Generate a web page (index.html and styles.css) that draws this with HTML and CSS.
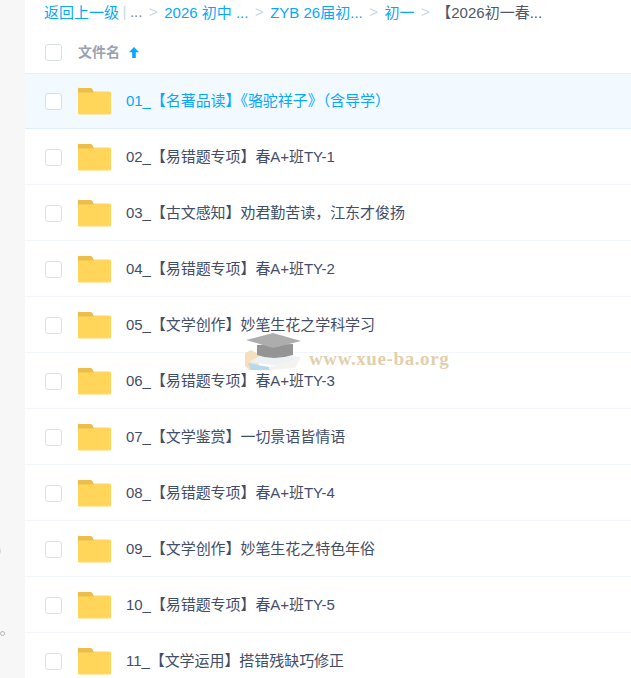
FILE: index.html
```html
<!DOCTYPE html>
<html lang="zh">
<head>
<meta charset="utf-8">
<title>文件列表</title>
<link rel="stylesheet" href="styles.css">
</head>
<body>
<div class="page">
  <aside class="side">
    <span class="dot dot-a"></span>
    <span class="dot dot-b"></span>
  </aside>
  <main class="main">
    <nav class="crumbs">
      <a class="link">返回上一级</a><span class="bar">|</span><a class="link muted">...</a><span class="sep">&gt;</span><a class="link">2026 初中 ...</a><span class="sep">&gt;</span><a class="link">ZYB 26届初...</a><span class="sep">&gt;</span><a class="link">初一</a><span class="sep">&gt;</span><span class="current">【2026初一春...</span>
    </nav>
    <div class="head">
      <span class="check"></span>
      <span class="head-name">文件名</span>
      <svg class="arrow" width="10" height="11" viewBox="0 0 10 11"><path d="M5 0 L10 5.3 H6.8 V11 H3.2 V5.3 H0 Z" fill="#06a7ff"/></svg>
    </div>
    <ul class="list">
      <li class="row active"><span class="check"></span><svg class="folder" width="34" height="28" viewBox="0 0 34 28"><rect y="4.5" width="33" height="23" rx="1.5" fill="#ffd659"/><path d="M0 5.5A1.5 1.5 0 0 1 1.5 1H12.5C14 1 15 2 15.5 5.5Z" fill="#eabd4c"/></svg><span class="name">01_【名著品读】《骆驼祥子》（含导学）</span></li>
      <li class="row"><span class="check"></span><svg class="folder" width="34" height="28" viewBox="0 0 34 28"><rect y="4.5" width="33" height="23" rx="1.5" fill="#ffd659"/><path d="M0 5.5A1.5 1.5 0 0 1 1.5 1H12.5C14 1 15 2 15.5 5.5Z" fill="#eabd4c"/></svg><span class="name">02_【易错题专项】春A+班TY-1</span></li>
      <li class="row"><span class="check"></span><svg class="folder" width="34" height="28" viewBox="0 0 34 28"><rect y="4.5" width="33" height="23" rx="1.5" fill="#ffd659"/><path d="M0 5.5A1.5 1.5 0 0 1 1.5 1H12.5C14 1 15 2 15.5 5.5Z" fill="#eabd4c"/></svg><span class="name">03_【古文感知】劝君勤苦读，江东才俊扬</span></li>
      <li class="row"><span class="check"></span><svg class="folder" width="34" height="28" viewBox="0 0 34 28"><rect y="4.5" width="33" height="23" rx="1.5" fill="#ffd659"/><path d="M0 5.5A1.5 1.5 0 0 1 1.5 1H12.5C14 1 15 2 15.5 5.5Z" fill="#eabd4c"/></svg><span class="name">04_【易错题专项】春A+班TY-2</span></li>
      <li class="row"><span class="check"></span><svg class="folder" width="34" height="28" viewBox="0 0 34 28"><rect y="4.5" width="33" height="23" rx="1.5" fill="#ffd659"/><path d="M0 5.5A1.5 1.5 0 0 1 1.5 1H12.5C14 1 15 2 15.5 5.5Z" fill="#eabd4c"/></svg><span class="name">05_【文学创作】妙笔生花之学科学习</span></li>
      <li class="row"><span class="check"></span><svg class="folder" width="34" height="28" viewBox="0 0 34 28"><rect y="4.5" width="33" height="23" rx="1.5" fill="#ffd659"/><path d="M0 5.5A1.5 1.5 0 0 1 1.5 1H12.5C14 1 15 2 15.5 5.5Z" fill="#eabd4c"/></svg><span class="name">06_【易错题专项】春A+班TY-3</span></li>
      <li class="row"><span class="check"></span><svg class="folder" width="34" height="28" viewBox="0 0 34 28"><rect y="4.5" width="33" height="23" rx="1.5" fill="#ffd659"/><path d="M0 5.5A1.5 1.5 0 0 1 1.5 1H12.5C14 1 15 2 15.5 5.5Z" fill="#eabd4c"/></svg><span class="name">07_【文学鉴赏】一切景语皆情语</span></li>
      <li class="row"><span class="check"></span><svg class="folder" width="34" height="28" viewBox="0 0 34 28"><rect y="4.5" width="33" height="23" rx="1.5" fill="#ffd659"/><path d="M0 5.5A1.5 1.5 0 0 1 1.5 1H12.5C14 1 15 2 15.5 5.5Z" fill="#eabd4c"/></svg><span class="name">08_【易错题专项】春A+班TY-4</span></li>
      <li class="row"><span class="check"></span><svg class="folder" width="34" height="28" viewBox="0 0 34 28"><rect y="4.5" width="33" height="23" rx="1.5" fill="#ffd659"/><path d="M0 5.5A1.5 1.5 0 0 1 1.5 1H12.5C14 1 15 2 15.5 5.5Z" fill="#eabd4c"/></svg><span class="name">09_【文学创作】妙笔生花之特色年俗</span></li>
      <li class="row"><span class="check"></span><svg class="folder" width="34" height="28" viewBox="0 0 34 28"><rect y="4.5" width="33" height="23" rx="1.5" fill="#ffd659"/><path d="M0 5.5A1.5 1.5 0 0 1 1.5 1H12.5C14 1 15 2 15.5 5.5Z" fill="#eabd4c"/></svg><span class="name">10_【易错题专项】春A+班TY-5</span></li>
      <li class="row"><span class="check"></span><svg class="folder" width="34" height="28" viewBox="0 0 34 28"><rect y="4.5" width="33" height="23" rx="1.5" fill="#ffd659"/><path d="M0 5.5A1.5 1.5 0 0 1 1.5 1H12.5C14 1 15 2 15.5 5.5Z" fill="#eabd4c"/></svg><span class="name">11_【文学运用】搭错残缺巧修正</span></li>
    </ul>
  </main>
  <div class="mark">
    <svg class="mark-logo" width="60" height="39" viewBox="0 0 60 39">
      <path d="M0 20 L6 17 L16 22 L12 37 L4 37 L0 33 Z" fill="#f6dfbd"/>
      <path d="M4 29 L18 21 L56 24 L36 33 Z" fill="#eef1f3"/>
      <path d="M3 30 L24 34 L25 37 L6 37 Z" fill="#b7d9ec"/>
      <path d="M24 34 L56 25 L50 35 L25 37 Z" fill="#f4f3ef"/>
      <path d="M12 12 V22 Q28 28 48 22 V11 Z" fill="#949494"/>
      <path d="M1 7 L28 0 L56 8 L28 15 Z" fill="#adadad"/>
    </svg>
    <span class="mark-text">www.xue-ba.org</span>
  </div>
</div>
</body>
</html>
```
FILE: styles.css
```css
* { box-sizing: border-box; }
html, body { margin: 0; padding: 0; height: 100%; overflow: hidden; background: #fff; }
body { font-family: "Liberation Sans", "Noto Sans CJK SC", sans-serif; font-size: 15px; color: #424e67; }
.page { position: relative; display: flex; height: 678px; overflow: hidden; }
.side { position: relative; flex: 0 0 25px; background: #f7f7f7; }
.dot { position: absolute; border-radius: 50%; }
.dot-a { left: -3px; top: 548px; width: 4px; height: 6px; background: #d8d8d8; }
.dot-b { left: 0; top: 631px; width: 5px; height: 5px; border: 1.5px solid #b5b5b5; }
.main { flex: 1; min-width: 0; }
.crumbs { display: flex; align-items: center; height: 20px; padding-left: 19px; padding-top: 3px; white-space: nowrap; color: #06a7ff; }
.link { color: #06a7ff; }
.muted { color: #7b8494; }
.bar { color: #c7d9ee; margin: 0 3.5px; }
.sep { color: #c9d6e6; margin: 0 6.5px; }
.current { color: #505866; }
.head { display: flex; align-items: center; height: 53px; padding: 11px 0 0 20px; }
.head-name { color: #9ba1af; font-weight: 700; font-size: 14px; margin-left: 16px; line-height: 16px; }
.arrow { margin-left: 9px; }
.check { flex: none; width: 17px; height: 17px; border: 1px solid #d7dfea; border-radius: 3px; background: #fff; }
.list { list-style: none; margin: 0; padding: 0; }
.row { display: flex; align-items: center; height: 56px; padding: 1px 0 0 20px; border-bottom: 1px solid #f2f6fb; }
.row.active { background: #f2faff; padding-top: 0; border-top: 1px solid #dfeefb; border-bottom-color: #dfeefb; color: #06a7ff; }
.folder { flex: none; margin-left: 16px; }
.name { margin-left: 14px; white-space: nowrap; line-height: 20px; letter-spacing: -.06px; }
.mark { position: absolute; left: 245px; top: 333px; display: flex; align-items: flex-start; }
.mark-logo { flex: none; }
.mark-text { margin: 15px 0 0 4px; font-family: "Liberation Serif", serif; font-weight: 700; font-size: 19px; line-height: 22px; letter-spacing: .6px; color: #e2cfae; }
```
